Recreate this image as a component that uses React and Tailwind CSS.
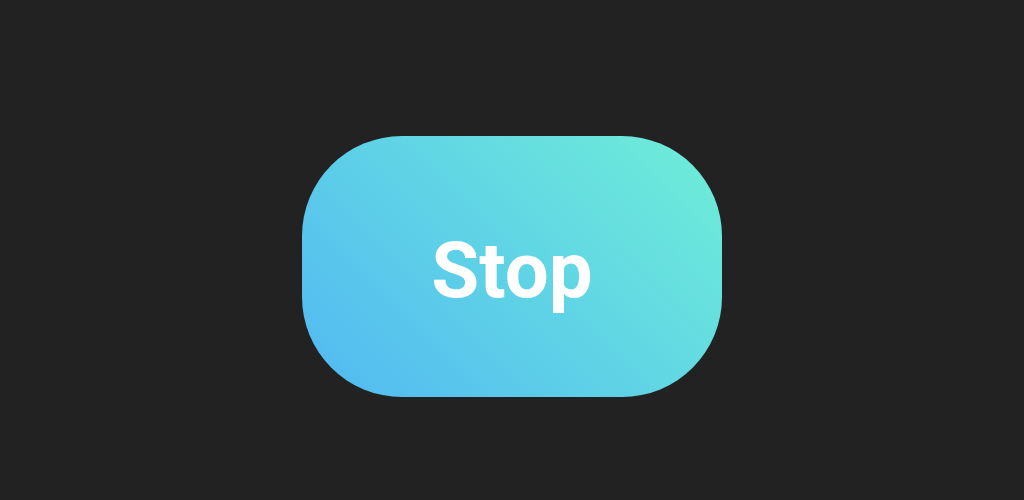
import React from 'react';

const App = () => {
  return (
    <div className="w-full h-[500px] bg-[#222222] flex justify-center pt-[136px]" style={{ fontFamily: 'Roboto, "Liberation Sans", sans-serif' }}>
      <button className="w-[420px] h-[261px] rounded-[100px] bg-linear-45 from-[#52b8f2] to-[#70eed6] flex items-center justify-center pt-[8px] text-white text-[78px] font-bold">
        Stop
      </button>
    </div>
  );
};

export default App;
